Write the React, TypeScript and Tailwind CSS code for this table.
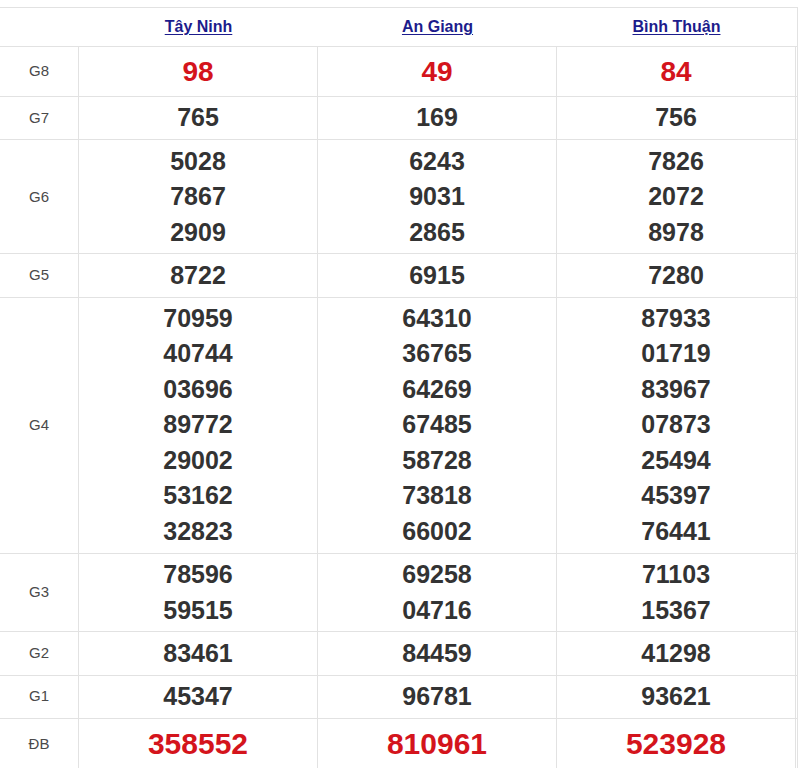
const PROVINCES = ["Tây Ninh", "An Giang", "Bình Thuận"];

type Row = { label: string; values: string[][]; kind?: "g8" | "db" };

const ROWS: Row[] = [
  { label: "G8", kind: "g8", values: [["98"], ["49"], ["84"]] },
  { label: "G7", values: [["765"], ["169"], ["756"]] },
  {
    label: "G6",
    values: [
      ["5028", "7867", "2909"],
      ["6243", "9031", "2865"],
      ["7826", "2072", "8978"],
    ],
  },
  { label: "G5", values: [["8722"], ["6915"], ["7280"]] },
  {
    label: "G4",
    values: [
      ["70959", "40744", "03696", "89772", "29002", "53162", "32823"],
      ["64310", "36765", "64269", "67485", "58728", "73818", "66002"],
      ["87933", "01719", "83967", "07873", "25494", "45397", "76441"],
    ],
  },
  {
    label: "G3",
    values: [
      ["78596", "59515"],
      ["69258", "04716"],
      ["71103", "15367"],
    ],
  },
  { label: "G2", values: [["83461"], ["84459"], ["41298"]] },
  { label: "G1", values: [["45347"], ["96781"], ["93621"]] },
  { label: "ĐB", kind: "db", values: [["358552"], ["810961"], ["523928"]] },
];

function Cell({ nums, kind }: { nums: string[]; kind?: Row["kind"] }) {
  if (kind === "g8") {
    return (
      <div className="w-[239px] border-r border-[#e2e2e2] flex items-center justify-center h-[49px] text-[28px] font-bold text-[#d4141c]">
        {nums[0]}
      </div>
    );
  }
  if (kind === "db") {
    return (
      <div className="w-[239px] border-r border-[#e2e2e2] flex items-center justify-center h-[50px] text-[30px] font-bold text-[#d4141c]">
        {nums[0]}
      </div>
    );
  }
  return (
    <div className="w-[239px] border-r border-[#e2e2e2] flex flex-col items-center py-[3.35px] text-[25px] leading-[35.5px] font-bold text-[#333]">
      {nums.map((n) => (
        <span key={n}>{n}</span>
      ))}
    </div>
  );
}

export default function App() {
  return (
    <div className="w-[800px] h-[768px] overflow-hidden bg-white pt-[7px]" style={{ fontFamily: '"Liberation Sans", Arial, sans-serif' }}>
      <div className="w-[798px] border-t border-r border-[#e2e2e2]">
        <div className="flex h-[39px] border-b border-[#e2e2e2]">
          <div className="w-[79px]" />
          {PROVINCES.map((p) => (
            <div key={p} className="w-[239px] flex items-center justify-center">
              <a href="#" className="text-[16px] font-bold text-[#1c1c8c] underline underline-offset-2">
                {p}
              </a>
            </div>
          ))}
        </div>
        {ROWS.map((row) => (
          <div key={row.label} className="flex border-b border-[#e2e2e2]">
            <div className="w-[79px] border-r border-[#e2e2e2] flex items-center justify-center text-[15px] text-[#4a4a4a]">
              {row.label}
            </div>
            {row.values.map((nums, i) => (
              <Cell key={i} nums={nums} kind={row.kind} />
            ))}
          </div>
        ))}
      </div>
    </div>
  );
}
